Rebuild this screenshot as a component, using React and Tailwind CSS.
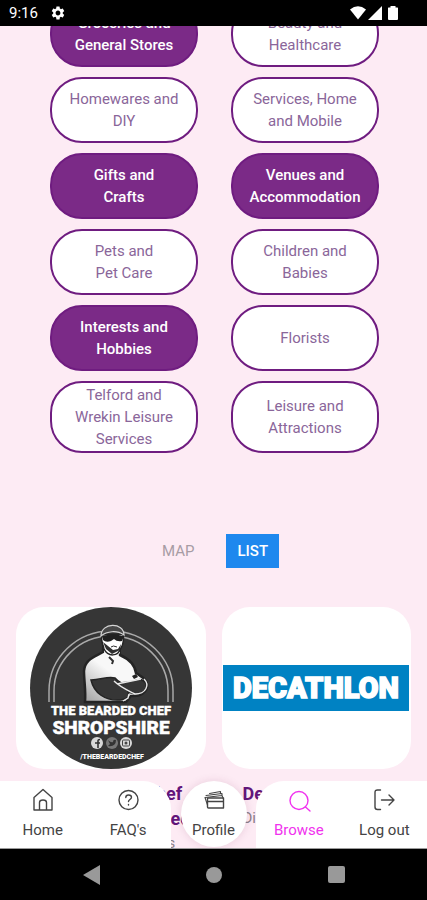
import { MdSettings } from "react-icons/md";

const categories = [
  { lines: ["Groceries and", "General Stores"], active: true },
  { lines: ["Beauty and", "Healthcare"], active: false },
  { lines: ["Homewares and", "DIY"], active: false },
  { lines: ["Services, Home", "and Mobile"], active: false },
  { lines: ["Gifts and", "Crafts"], active: true },
  { lines: ["Venues and", "Accommodation"], active: true },
  { lines: ["Pets and", "Pet Care"], active: false },
  { lines: ["Children and", "Babies"], active: false },
  { lines: ["Interests and", "Hobbies"], active: true },
  { lines: ["Florists"], active: false },
  { lines: ["Telford and", "Wrekin Leisure", "Services"], active: false },
  { lines: ["Leisure and", "Attractions"], active: false },
];

function StatusBar() {
  return (
    <header className="flex h-[26px] shrink-0 items-center justify-between bg-black pr-7 pl-[9px] text-white">
      <div className="flex items-center gap-3">
        <span className="text-[15px] leading-5">9:16</span>
        <MdSettings size={16} aria-label="Settings" />
      </div>
      <svg width="50" height="16" viewBox="0 0 50 16" fill="currentColor" aria-label="Wifi, signal and battery">
        <path d="M1 4.600Q9 -2.200 17 4.600L9 14.600Z" />
        <path d="M33 1V15H19Z" />
        <path d="M39.500 2.500H41.500V1H46.500V2.500H48.500Q49 2.500 49 3V14Q49 15 48 15H40Q39 15 39 14V3Q39 2.500 39.500 2.500Z" />
      </svg>
    </header>
  );
}

function CategoryButton({ lines, active }) {
  return (
    <button
      type="button"
      aria-pressed={active}
      className={
        "flex min-h-[66px] flex-col items-center justify-center rounded-[32px] border-2 border-[#6f1c80] py-px text-[15px] leading-[22px] " +
        (active ? "bg-[#7b2a87] font-medium text-white" : "bg-white font-normal text-[#8a669a]")
      }
    >
      {lines.map((line) => (
        <span key={line} className="block whitespace-nowrap">{line}</span>
      ))}
    </button>
  );
}

function BeardedChefLogo() {
  return (
    <svg width="164" height="162" viewBox="0 0 164 162" role="img" aria-label="The Bearded Chef Shropshire">
      <defs>
        <linearGradient id="shirt" x1="0" y1="1" x2="0.7" y2="0">
          <stop offset="0" stopColor="#a0a0a0" />
          <stop offset="0.5" stopColor="#f8f8f8" />
        </linearGradient>
      </defs>
      <circle cx="82" cy="81" r="81" fill="#363636" />
      <g fill="none" stroke="#a9a9a9" strokeWidth="1.500">
        <path d="M20 95V84A62 60 0 0 1 144 84V95" />
        <path d="M25 95V84A57 55 0 0 1 139 84V95" />
      </g>
      <path d="M74 45C66 50 56 52 55 64C55 74 57 84 56 95H97L102 89C114 90 121 82 117 74C114 70 110 68 107 66C106 58 100 52 91 48L89 28H75Z" fill="url(#shirt)" stroke="#242424" strokeWidth="2.500" />
      <path d="M75 45L83 53L91 46V40H76Z" fill="#fff" />
      <path d="M73 28C71 34 74 36 75 42C79 50 89 50 92 41C95 36 95 32 94 27Z" fill="#fff" stroke="#242424" strokeWidth="1.500" />
      <path d="M72 29C72 15 95 15 95 28C88 23 78 24 72 29Z" fill="#484848" stroke="#d5d5d5" strokeWidth="1.200" />
      <path d="M73 29Q84 26 95 29L93 34Q88 35 85 32L82 34Q77 36 74 33Z" fill="#202020" />
      <path d="M74 35L77 42L83 47L91 43L92 37L89 42L84 43Z" fill="#303030" />
      <path d="M82 40Q84 38 88 40" fill="none" stroke="#303030" />
      <path d="M80 50L84 54L83 57" fill="none" stroke="#303030" strokeWidth="2" />
      <path d="M62 73C72 73 78 69 86 71C90 76 97 79 106 83C112 83 113 76 108 73C116 71 120 79 115 84C112 88 105 87 99 85C101 91 98 92 91 93C76 94 65 86 62 73Z" fill="#363636" stroke="#242424" strokeWidth="1.500" />
      <path d="M93 75L112 73L115 80L108 86L97 82Z" fill="#363636" />
      <path d="M85 74C91 80 98 83 106 87C117 87 121 78 115 72M88 77L112 72M100 87L99 91L94 94" fill="none" stroke="#e8e8e8" strokeWidth="1.400" />
      <path d="M103 69L107 67L109 70L105 72Z" fill="#222" />
      <g fill="#fff" stroke="#fff" textAnchor="middle" className="font-[Roboto,sans-serif]">
        <text x="82" y="108" fontSize="13" fontWeight="900" strokeWidth="0.300">THE BEARDED CHEF</text>
        <text x="82" y="127" fontSize="19" fontWeight="900" strokeWidth="0.400">SHROPSHIRE</text>
        <text x="83" y="152" fontSize="7" fontWeight="900" stroke="none">/THEBEARDEDCHEF</text>
      </g>
      <circle cx="68" cy="136" r="6" fill="#d8d8d8" />
      <path d="M69 141V136H71M69 136H66M69 136V133.500Q69 132.500 71 132.500" fill="none" stroke="#333" strokeWidth="1.600" />
      <circle cx="83" cy="136" r="6" fill="#777" />
      <path d="M79 133Q82 136 84 135Q84 132 87 133Q87 140 79 139L81 137Z" fill="#333" />
      <circle cx="97" cy="136" r="6" fill="#d8d8d8" />
      <rect x="93.500" y="133" width="7" height="6" rx="1" fill="none" stroke="#444" />
      <circle cx="97" cy="136" r="1.500" fill="#444" />
    </svg>
  );
}

function DecathlonLogo() {
  return (
    <svg width="186" height="46" viewBox="0 0 186 46" role="img" aria-label="Decathlon">
      <rect width="186" height="46" fill="#0082c3" />
      <text
        x="93"
        y="33"
        textAnchor="middle"
        fontSize="29"
        fontWeight="900"
        fill="#fff"
        stroke="#fff"
        strokeWidth="1.500"
        className="font-[Roboto,sans-serif]"
      >
        DECATHLON
      </text>
    </svg>
  );
}

function BusinessCard({ logo, title, subtitle }) {
  return (
    <article>
      <div className="flex h-[162px] items-center justify-center overflow-hidden rounded-[28px] bg-white">{logo}</div>
      <div className="px-[21px] pt-3">
        <h2 className="text-[18px] leading-[25px] font-bold whitespace-nowrap text-[#62157a]">{title}</h2>
        <p className="text-[15px] leading-6 whitespace-nowrap text-[#8c8088]">{subtitle}</p>
      </div>
    </article>
  );
}

function Icon({ children }) {
  return (
    <svg width="24" height="24" viewBox="0 0 24 24" fill="none" stroke="currentColor" strokeWidth="1.400" strokeLinecap="round" strokeLinejoin="round" aria-hidden="true">
      {children}
    </svg>
  );
}

function NavItem({ label, icon, current }) {
  return (
    <a
      href="#"
      aria-current={current ? "page" : undefined}
      className={"flex flex-1 flex-col items-center gap-2 pt-[7px] text-[15px] leading-5 " + (current ? "text-[#f032ee]" : "text-[#444444]")}
    >
      <Icon>{icon}</Icon>
      {label}
    </a>
  );
}

function BottomNav() {
  return (
    <nav className="absolute inset-x-0 bottom-0 flex h-[68px] border-b border-[#9b9b9b]">
      <div className="flex flex-2 rounded-tr-[28px] bg-white">
        <NavItem
          label="Home"
          icon={<path d="M3 9.500L12 1.500L21 9.500V22H3ZM8.500 22V14.500Q8.500 12 12 12Q15.500 12 15.500 14.500V22" />}
        />
        <NavItem
          label="FAQ's"
          icon={
            <>
              <circle cx="12.500" cy="12" r="9.500" />
              <path d="M9.800 9.500C9.800 6 15.500 6.200 15.500 9.300C15.500 11.500 12.500 11.500 12.500 13.500M12.500 16.500V17" />
            </>
          }
        />
      </div>
      <div className="flex flex-1 justify-center">
        <div className="flex size-[66px] rounded-full bg-white shadow-[0_0_8px_rgba(120,40,90,0.15)]">
          <NavItem
            label="Profile"
            icon={
              <>
                <path d="M5.500 10H21.500V20H6.500Q5.500 20 5.500 19ZM5.500 13.500H21.500" />
                <path d="M5.500 17L3 9.500L20 7.500L21 10M4 7.500L20 5.500V7.500M7.500 5.500L18.500 3.500V5.500" strokeWidth="1.100" />
              </>
            }
          />
        </div>
      </div>
      <div className="flex flex-2 rounded-tl-[28px] bg-white">
        <NavItem
          label="Browse"
          current
          icon={
            <>
              <circle cx="12" cy="12.500" r="9" />
              <path d="M18.500 19L23 23" />
            </>
          }
        />
        <NavItem label="Log out" icon={<path d="M8.500 2H5.500Q3 2 3 4.500V19Q3 21.500 5.500 21.500H8.500M9.500 12H22M17 7L22 12L17 17" />} />
      </div>
    </nav>
  );
}

function SystemNav() {
  return (
    <footer className="flex h-[51px] shrink-0 items-center justify-center gap-[106px] bg-black text-[#999999]">
      <button type="button" aria-label="Back">
        <svg width="17" height="20" viewBox="0 0 17 20" fill="currentColor"><path d="M0 10L17 0V20Z" /></svg>
      </button>
      <button type="button" aria-label="Home" className="size-4 rounded-full bg-[#999999]" />
      <button type="button" aria-label="Recent apps" className="size-[17px] rounded-xs bg-[#999999]" />
    </footer>
  );
}

export default function App() {
  return (
    <div className="flex h-screen flex-col overflow-hidden bg-[#fdebf4] font-[Roboto,sans-serif]">
      <StatusBar />
      <div className="relative min-h-0 flex-1 overflow-hidden">
        <main className="-mt-[25px]">
          <section aria-label="Categories" className="grid grid-cols-2 gap-x-[33px] gap-y-[10px] pr-12 pl-[50px]">
            {categories.map((category) => (
              <CategoryButton key={category.lines.join(" ")} {...category} />
            ))}
          </section>
          <div className="mt-[81px] flex justify-center gap-[21px] pl-[3px]">
            <button type="button" className="h-[34px] px-[11px] text-[15px] text-[#a79ca4]">MAP</button>
            <button type="button" className="h-[34px] bg-[#1e88ee] px-[11px] text-[15px] font-medium text-white">LIST</button>
          </div>
          <section aria-label="Businesses" className="mt-[39px] grid grid-cols-2 gap-4 px-4">
            <BusinessCard
              logo={<BeardedChefLogo />}
              title={<>The Bearded Chef<br />Shropshire Limited</>}
              subtitle="Mobile food caterers"
            />
            <BusinessCard logo={<DecathlonLogo />} title="Decathlon" subtitle="Discount" />
          </section>
        </main>
        <BottomNav />
      </div>
      <SystemNav />
    </div>
  );
}
